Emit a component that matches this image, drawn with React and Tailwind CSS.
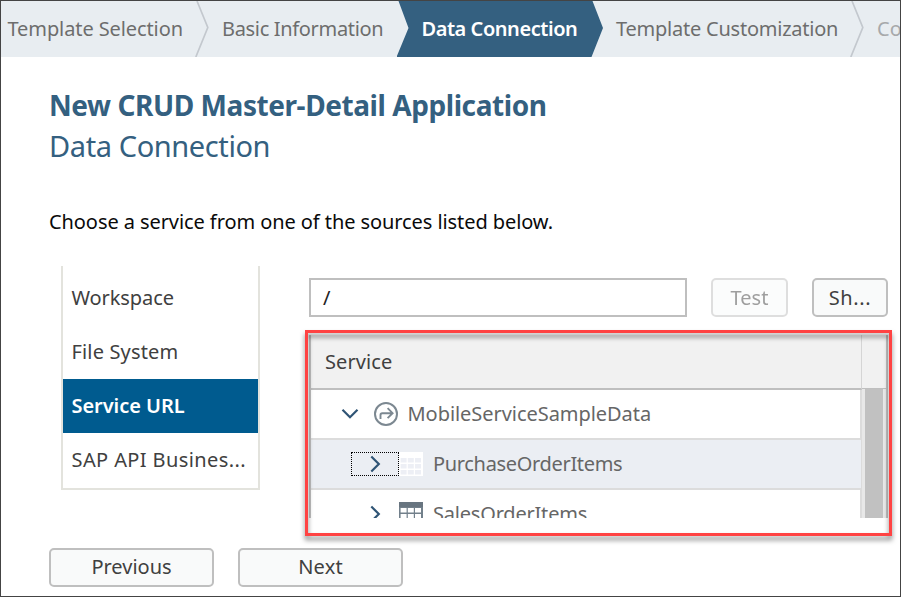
function StepDivider() {
  return (
    <svg width="14" height="56" viewBox="0 0 14 56" className="shrink-0" fill="none" stroke="#c3c8ce" strokeWidth="1.7">
      <path d="M2 0 L12.8 26.5 L0.8 56" />
    </svg>
  );
}

function WizardSteps() {
  return (
    <nav className="flex h-14 shrink-0 overflow-hidden bg-[#e8edf1] leading-[56px] whitespace-nowrap text-[#6d6d6d]">
      <span className="w-[194px] shrink-0 pl-[6.5px] tracking-[-0.1px]">Template Selection</span>
      <StepDivider />
      <span className="w-[187.5px] shrink-0 pl-[13px] tracking-[-0.33px]">Basic Information</span>
      <div className="w-[206.5px] shrink-0 bg-[#346080] pl-[25px] font-semibold tracking-[-0.45px] text-white [clip-path:polygon(2px_0,12px_27px,0_100%,195px_100%,206.5px_27px,196px_0)]">
        Data Connection
      </div>
      <span className="w-[247px] shrink-0 pl-[13px] tracking-[-0.23px]">Template Customization</span>
      <StepDivider />
      <span className="shrink-0 pl-[13px] text-[#a7a9ab]">Confirmation</span>
    </nav>
  );
}

const sources = [
  { label: "Workspace", cls: "text-[#404040] tracking-[-0.1px]" },
  { label: "File System", cls: "tracking-[0.15px] text-[#404040]" },
  { label: "Service URL", cls: "bg-[#005b8f] font-semibold text-white tracking-[-0.05px]" },
  { label: "SAP API Busines...", cls: "tracking-[0.4px] text-[#404040]" },
];

function SourceList() {
  return (
    <ul className="ml-3 h-[224px] w-[199px] shrink-0 border-2 border-t-0 border-[#e3e3dd] pt-[5px]">
      {sources.map((s) => (
        <li key={s.label} className={`h-[54px] pl-[8.5px] leading-[53px] whitespace-nowrap ${s.cls}`}>
          {s.label}
        </li>
      ))}
    </ul>
  );
}

function Button({ className, children }) {
  return (
    <button className={`h-[39px] shrink-0 rounded-[5px] border-2 border-[#bfbfbf] bg-[#f9fafa] leading-[34px] text-[#404040] ${className}`}>
      {children}
    </button>
  );
}

function ChevronDown() {
  return (
    <svg width="18" height="12" viewBox="0 0 18 12" fill="none" stroke="#2f5475" strokeWidth="2.2">
      <path d="M1.5 1.8 L9 9.2 L16.5 1.8" />
    </svg>
  );
}

function ChevronRight() {
  return (
    <svg width="12" height="18" viewBox="0 0 12 18" fill="none" stroke="#2f5475" strokeWidth="2.2">
      <path d="M1.3 1.5 L8.8 9 L1.3 16.5" />
    </svg>
  );
}

function ServiceIcon() {
  return (
    <svg width="24" height="24" viewBox="0 0 24 24" fill="none" stroke="#7c8891" strokeWidth="2">
      <circle cx="12" cy="12" r="11" />
      <path d="M6.5 17 V13 Q6.5 11.2 8.3 11.2 H18 M13.6 6.2 L18.6 11.2 L13.6 16.2" strokeWidth="1.9" />
    </svg>
  );
}

function TableIcon({ fill, cell, head }) {
  return (
    <svg width="24" height="24" viewBox="0 0 24 24">
      <rect width="24" height="24" fill={fill} />
      <rect width="24" height="5" fill={head} />
      {[6, 12, 18].map((y) =>
        [1.6, 8.8, 16].map((x) => <rect key={`${x}-${y}`} x={x} y={y} width="6" height="4.5" fill={cell} />)
      )}
    </svg>
  );
}

function ServiceTable() {
  return (
    <div className="flex h-[183px] w-[579px] overflow-hidden border-x-2 border-[#bfbfbf] text-[#666666]">
      <div className="w-[551px]">
        <div className="h-[55px] border-b-2 border-r border-b-[#bfbfbf] border-r-[#d5d5d5] bg-[#f1f1f1] pt-[2px] pl-[14px] leading-[49px] tracking-[0.1px] text-[#404040]">
          Service
        </div>
        <div className="flex h-[50px] items-center border-r-2 border-b-2 border-[#dcdcdc] pl-[30px]">
          <ChevronDown />
          <span className="ml-[15px]"><ServiceIcon /></span>
          <span className="ml-[9.5px] pb-[1px] tracking-[-0.05px]">MobileServiceSampleData</span>
        </div>
        <div className="flex h-[50px] items-center border-r border-b-2 border-[#dcdcdc] bg-[#ebeef3] pl-10">
          <span className="flex h-6 w-12 items-center border border-dotted border-black pl-[18px]"><ChevronRight /></span>
          <TableIcon fill="#ffffff" head="#ffffff" cell="#edeff5" />
          <span className="ml-[10px] pb-[1px] tracking-[-0.33px]">PurchaseOrderItems</span>
        </div>
        <div className="flex h-[48px] items-center border-r-2 border-[#dcdcdc] pl-10">
          <span className="flex h-6 w-12 items-center pl-[19px]"><ChevronRight /></span>
          <TableIcon fill="#72808b" head="#687580" cell="#ffffff" />
          <span className="ml-[10px] pb-[1px] tracking-[-0.2px]">SalesOrderItems</span>
        </div>
      </div>
      <div className="w-[24px]">
        <div className="h-[54px] border-b border-[#bfbfbf] bg-[#f1f1f1]" />
        <div className="flex h-[129px] bg-[#e8e8e8] pl-[3px]">
          <div className="w-[18px] bg-[#c1c1c1]" />
        </div>
      </div>
    </div>
  );
}

export default function App() {
  return (
    <div className="relative flex h-[597px] w-[901px] flex-col overflow-hidden border border-[#444444] bg-white font-['Noto_Sans',sans-serif] text-[20px]">
      <WizardSteps />
      <main className="flex flex-col pl-12">
        <h1 className="mt-[28px] text-[28px] leading-[40px] font-bold tracking-[-0.43px] text-[#346080]">New CRUD Master-Detail Application</h1>
        <h2 className="mt-[1px] text-[29px] leading-[40px] tracking-[-0.4px] text-[#346080]">Data Connection</h2>
        <p className="mt-[41px] leading-[30px] tracking-[-0.08px] text-[#0a0a0a]">Choose a service from one of the sources listed below.</p>
        <div className="mt-[29px] flex">
          <SourceList />
          <div className="ml-[49px] pt-3">
            <div className="flex">
              <div className="h-[39px] w-[378px] shrink-0 border-2 border-[#bfbfbf] pl-[12px] leading-[35px] text-[#222222]">/</div>
              <Button className="ml-6 w-[77px] pt-px opacity-50">Test</Button>
              <Button className="ml-6 w-[76px] pt-px tracking-[0.6px]">Sh...</Button>
            </div>
            <div className="mt-[18px]"><ServiceTable /></div>
          </div>
        </div>
        <div className="mt-[30px] flex gap-6">
          <Button className="w-[165px] pb-px">Previous</Button>
          <Button className="w-[165px] pb-px tracking-[0.2px]">Next</Button>
        </div>
      </main>
      <div className="pointer-events-none absolute top-[329px] left-[304px] h-[206px] w-[587px] border-[3px] border-[#ff4343] [filter:drop-shadow(0_4px_2.5px_rgba(0,0,0,0.5))]" />
    </div>
  );
}
